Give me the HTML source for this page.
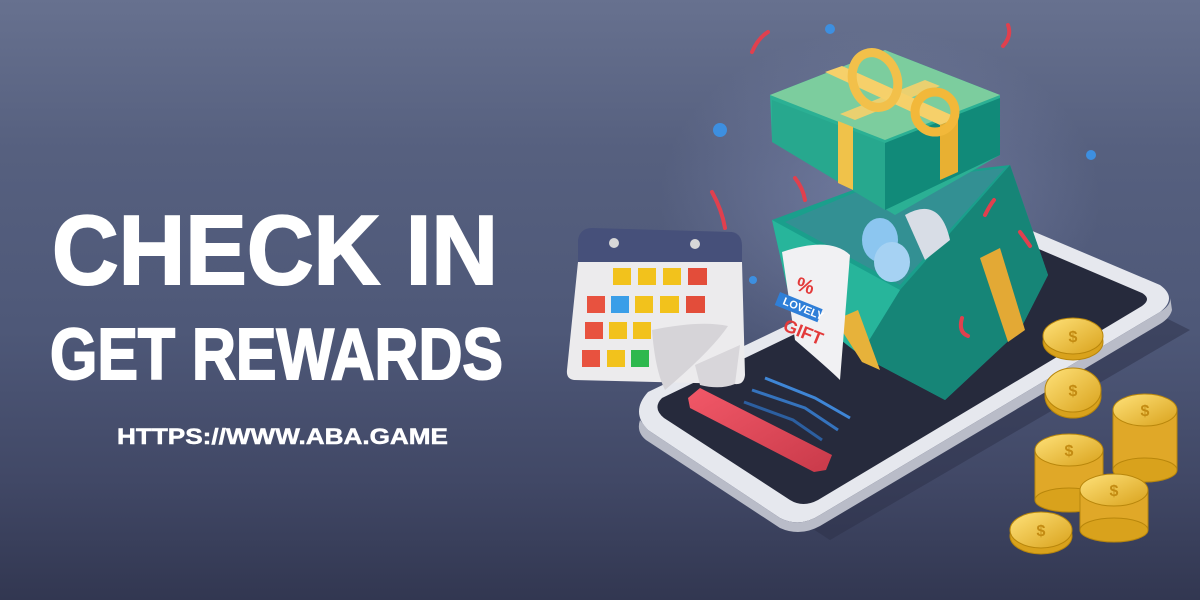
<!DOCTYPE html>
<html><head><meta charset="utf-8"><style>
html,body{margin:0;padding:0}
body{width:1200px;height:600px;overflow:hidden;background:linear-gradient(180deg,#67718f 0%,#56607f 25%,#4e5878 55%,#414866 80%,#323751 100%);}
svg{display:block}
</style></head><body>
<svg width="1200" height="600" viewBox="0 0 1200 600" xmlns="http://www.w3.org/2000/svg">
<defs>
<radialGradient id="glow" cx="0.5" cy="0.5" r="0.5"><stop offset="0" stop-color="#8c97c0" stop-opacity="0.5"/><stop offset="1" stop-color="#8c97c0" stop-opacity="0"/></radialGradient>
<linearGradient id="red" x1="0" y1="0" x2="1" y2="1"><stop offset="0" stop-color="#f25868"/><stop offset="1" stop-color="#c93a4a"/></linearGradient>
<linearGradient id="coin" x1="0" y1="0" x2="1" y2="1"><stop offset="0" stop-color="#ffe27a"/><stop offset="1" stop-color="#d9a21c"/></linearGradient>
</defs>
<ellipse cx="880" cy="200" rx="220" ry="170" fill="url(#glow)"/>
<g font-family="'Liberation Sans',sans-serif" font-weight="700" fill="#fff" stroke="#fff">
<text x="52" y="284" font-size="98" stroke-width="2" textLength="446" lengthAdjust="spacingAndGlyphs">CHECK IN</text>
<text x="50" y="379" font-size="72" stroke-width="2" textLength="453" lengthAdjust="spacingAndGlyphs">GET REWARDS</text>
<text x="117" y="444" font-size="22" stroke-width="0.5" textLength="331" lengthAdjust="spacingAndGlyphs">HTTPS://WWW.ABA.GAME</text>
</g>
<polygon points="660,430 830,540 1190,330 1150,310" fill="#2c3048" opacity="0.5"/>
<path d="M648,392 L990,228 Q1010,220 1030,230 L1160,285 Q1178,298 1160,312 L820,515 Q800,528 780,518 L648,430 Q630,412 648,392 Z" fill="#e6e8ee"/>
<path d="M648,430 L780,518 Q800,528 820,515 L1160,312 Q1172,305 1170,296 L1172,310 Q1170,318 1160,324 L820,526 Q800,537 780,528 L646,440 Q636,432 640,420 Z" fill="#b9bcc8"/>
<path d="M662,398 L990,240 Q1005,234 1020,241 L1142,293 Q1152,299 1142,306 L818,500 Q803,508 790,500 L664,418 Q652,408 662,398 Z" fill="#262a3c"/>
<polygon points="688,398 700,388 832,455 826,470 814,472 690,408" fill="url(#red)"/>
<g fill="none" stroke-width="3">
<polyline points="765,378 815,398 850,418" stroke="#3f86d6"/>
<polyline points="752,390 805,408 838,430" stroke="#3573bd"/>
<polyline points="744,402 793,420 822,440" stroke="#2c5fa0"/>
</g>
<path d="M578,240 Q580,228 592,228 L732,232 Q742,234 742,246 L742,262 L578,262 Z" fill="#46507a"/>
<path d="M578,262 L742,262 L745,375 Q744,385 735,384 L574,380 Q566,379 567,370 Z" fill="#ecebed"/>
<path d="M695,365 L740,345 L735,384 Q720,390 700,385 Z" fill="#d8d6da"/>
<circle cx="614" cy="243" r="5" fill="#d8d8d8"/><circle cx="695" cy="244" r="5" fill="#d8d8d8"/>
<g>
<rect x="613" y="268" width="18" height="17" fill="#f2c21c"/><rect x="638" y="268" width="18" height="17" fill="#f2c21c"/><rect x="663" y="268" width="18" height="17" fill="#f2c21c"/><rect x="688" y="268" width="19" height="17" fill="#e34d3a"/>
<rect x="587" y="296" width="18" height="17" fill="#e8523f"/><rect x="611" y="296" width="18" height="17" fill="#3a9ee8"/><rect x="635" y="296" width="18" height="17" fill="#f2c21c"/><rect x="660" y="296" width="19" height="17" fill="#f2c21c"/><rect x="686" y="296" width="19" height="17" fill="#e34d3a"/>
<rect x="585" y="322" width="18" height="17" fill="#e8523f"/><rect x="609" y="322" width="18" height="17" fill="#f2c21c"/><rect x="633" y="322" width="18" height="17" fill="#f2c21c"/>
<rect x="582" y="350" width="18" height="17" fill="#e8523f"/><rect x="607" y="350" width="18" height="17" fill="#f2c21c"/><rect x="631" y="350" width="18" height="17" fill="#2eb84e"/>
</g>
<path d="M652,330 Q700,320 728,326 Q712,350 665,390 Q655,370 652,330 Z" fill="#d6d4d8"/>
<polygon points="772,220 880,180 1010,165 1048,275 1020,330 945,400 860,355 790,300" fill="#1a9f8c"/>
<polygon points="860,355 945,400 1020,330 1048,275 1010,165 900,290" fill="#168577"/>
<polygon points="772,220 900,290 860,355 790,300" fill="#27b59b"/>
<polygon points="980,258 1000,248 1025,330 1008,342" fill="#e3a935"/>
<polygon points="835,320 858,310 880,370 862,362" fill="#e7b23a"/>
<polygon points="785,222 880,182 1005,168 900,285" fill="#3f8a96" opacity="0.7"/>
<ellipse cx="880" cy="240" rx="18" ry="22" fill="#8cc6f0"/>
<ellipse cx="892" cy="262" rx="18" ry="20" fill="#a6d2f3"/>
<path d="M905,215 Q940,195 950,240 L925,260 Z" fill="#d8dde6"/>
<path d="M782,252 Q830,236 850,255 L840,380 Q830,370 795,340 Z" fill="#f1f1f3"/>
<text x="795" y="290" font-family="'Liberation Sans',sans-serif" font-weight="700" font-size="20" fill="#e33a3a" transform="rotate(15 795 290)">%</text>
<rect x="780" y="292" width="46" height="14" fill="#2f7fd8" transform="rotate(22 780 292)"/>
<text x="782" y="304" font-family="'Liberation Sans',sans-serif" font-weight="700" font-size="11" fill="#fff" transform="rotate(22 782 304)">LOVELY</text>
<text x="782" y="330" font-family="'Liberation Sans',sans-serif" font-weight="700" font-size="18" fill="#e33a3a" transform="rotate(22 782 330)">GIFT</text>
<polygon points="770,95 885,50 1000,95 1000,155 895,215 772,140" fill="#2bb094"/>
<polygon points="770,95 885,50 1000,95 885,140" fill="#7ccd9e"/>
<polygon points="772,100 885,143 885,210 772,142" fill="#27a88e"/>
<polygon points="885,143 1000,98 1000,155 885,210" fill="#118a79"/>
<polygon points="825,72 842,66 958,118 940,125" fill="#f6d06a"/>
<polygon points="838,121 853,127 853,190 838,183" fill="#f0c24a"/>
<polygon points="940,125 958,118 958,172 940,180" fill="#e8b032"/>
<polygon points="925,80 940,86 855,120 840,114" fill="#f6d06a" opacity="0.9"/>
<ellipse cx="875" cy="80" rx="22" ry="28" fill="none" stroke="#f2c04a" stroke-width="9" transform="rotate(-20 875 80)"/>
<ellipse cx="935" cy="112" rx="20" ry="20" fill="none" stroke="#f2b83a" stroke-width="9"/>
<g fill="none" stroke="#e0404e" stroke-width="4" stroke-linecap="round">
<path d="M752,52 Q758,38 768,32"/><path d="M1003,46 Q1012,36 1008,25"/><path d="M712,192 Q722,210 725,228"/><path d="M795,178 Q803,188 805,200"/><path d="M1020,232 Q1026,240 1030,246"/><path d="M962,318 Q958,332 968,336"/><path d="M985,215 Q990,205 994,200"/>
</g>
<g fill="#3d8fe0"><circle cx="830" cy="29" r="5"/><circle cx="720" cy="130" r="7"/><circle cx="1091" cy="155" r="5"/><circle cx="753" cy="280" r="4"/></g>
<g stroke="#b8860b" stroke-width="1">
<g><ellipse cx="1073" cy="342" rx="30" ry="18" fill="#d9a21c"/><ellipse cx="1073" cy="336" rx="30" ry="18" fill="url(#coin)"/></g>
<g><ellipse cx="1073" cy="396" rx="28" ry="22" fill="#d9a21c"/><ellipse cx="1073" cy="390" rx="28" ry="22" fill="url(#coin)"/></g>
<g><rect x="1113" y="410" width="64" height="60" fill="#e0a828"/><ellipse cx="1145" cy="470" rx="32" ry="12" fill="#d9a21c"/><ellipse cx="1145" cy="410" rx="32" ry="16" fill="url(#coin)"/></g>
<g><rect x="1035" y="450" width="68" height="50" fill="#e0a828"/><ellipse cx="1069" cy="500" rx="34" ry="12" fill="#d9a21c"/><ellipse cx="1069" cy="450" rx="34" ry="16" fill="url(#coin)"/></g>
<g><rect x="1080" y="490" width="68" height="40" fill="#e0a828"/><ellipse cx="1114" cy="530" rx="34" ry="12" fill="#d9a21c"/><ellipse cx="1114" cy="490" rx="34" ry="16" fill="url(#coin)"/></g>
<g><ellipse cx="1041" cy="536" rx="31" ry="18" fill="#d9a21c"/><ellipse cx="1041" cy="530" rx="31" ry="18" fill="url(#coin)"/></g>
</g>
<g font-family="'Liberation Sans',sans-serif" font-weight="700" font-size="16" fill="#c38b12" text-anchor="middle">
<text x="1073" y="342">$</text><text x="1073" y="396">$</text><text x="1145" y="416">$</text><text x="1069" y="456">$</text><text x="1114" y="496">$</text><text x="1041" y="536">$</text>
</g>
</svg>
</body></html>
